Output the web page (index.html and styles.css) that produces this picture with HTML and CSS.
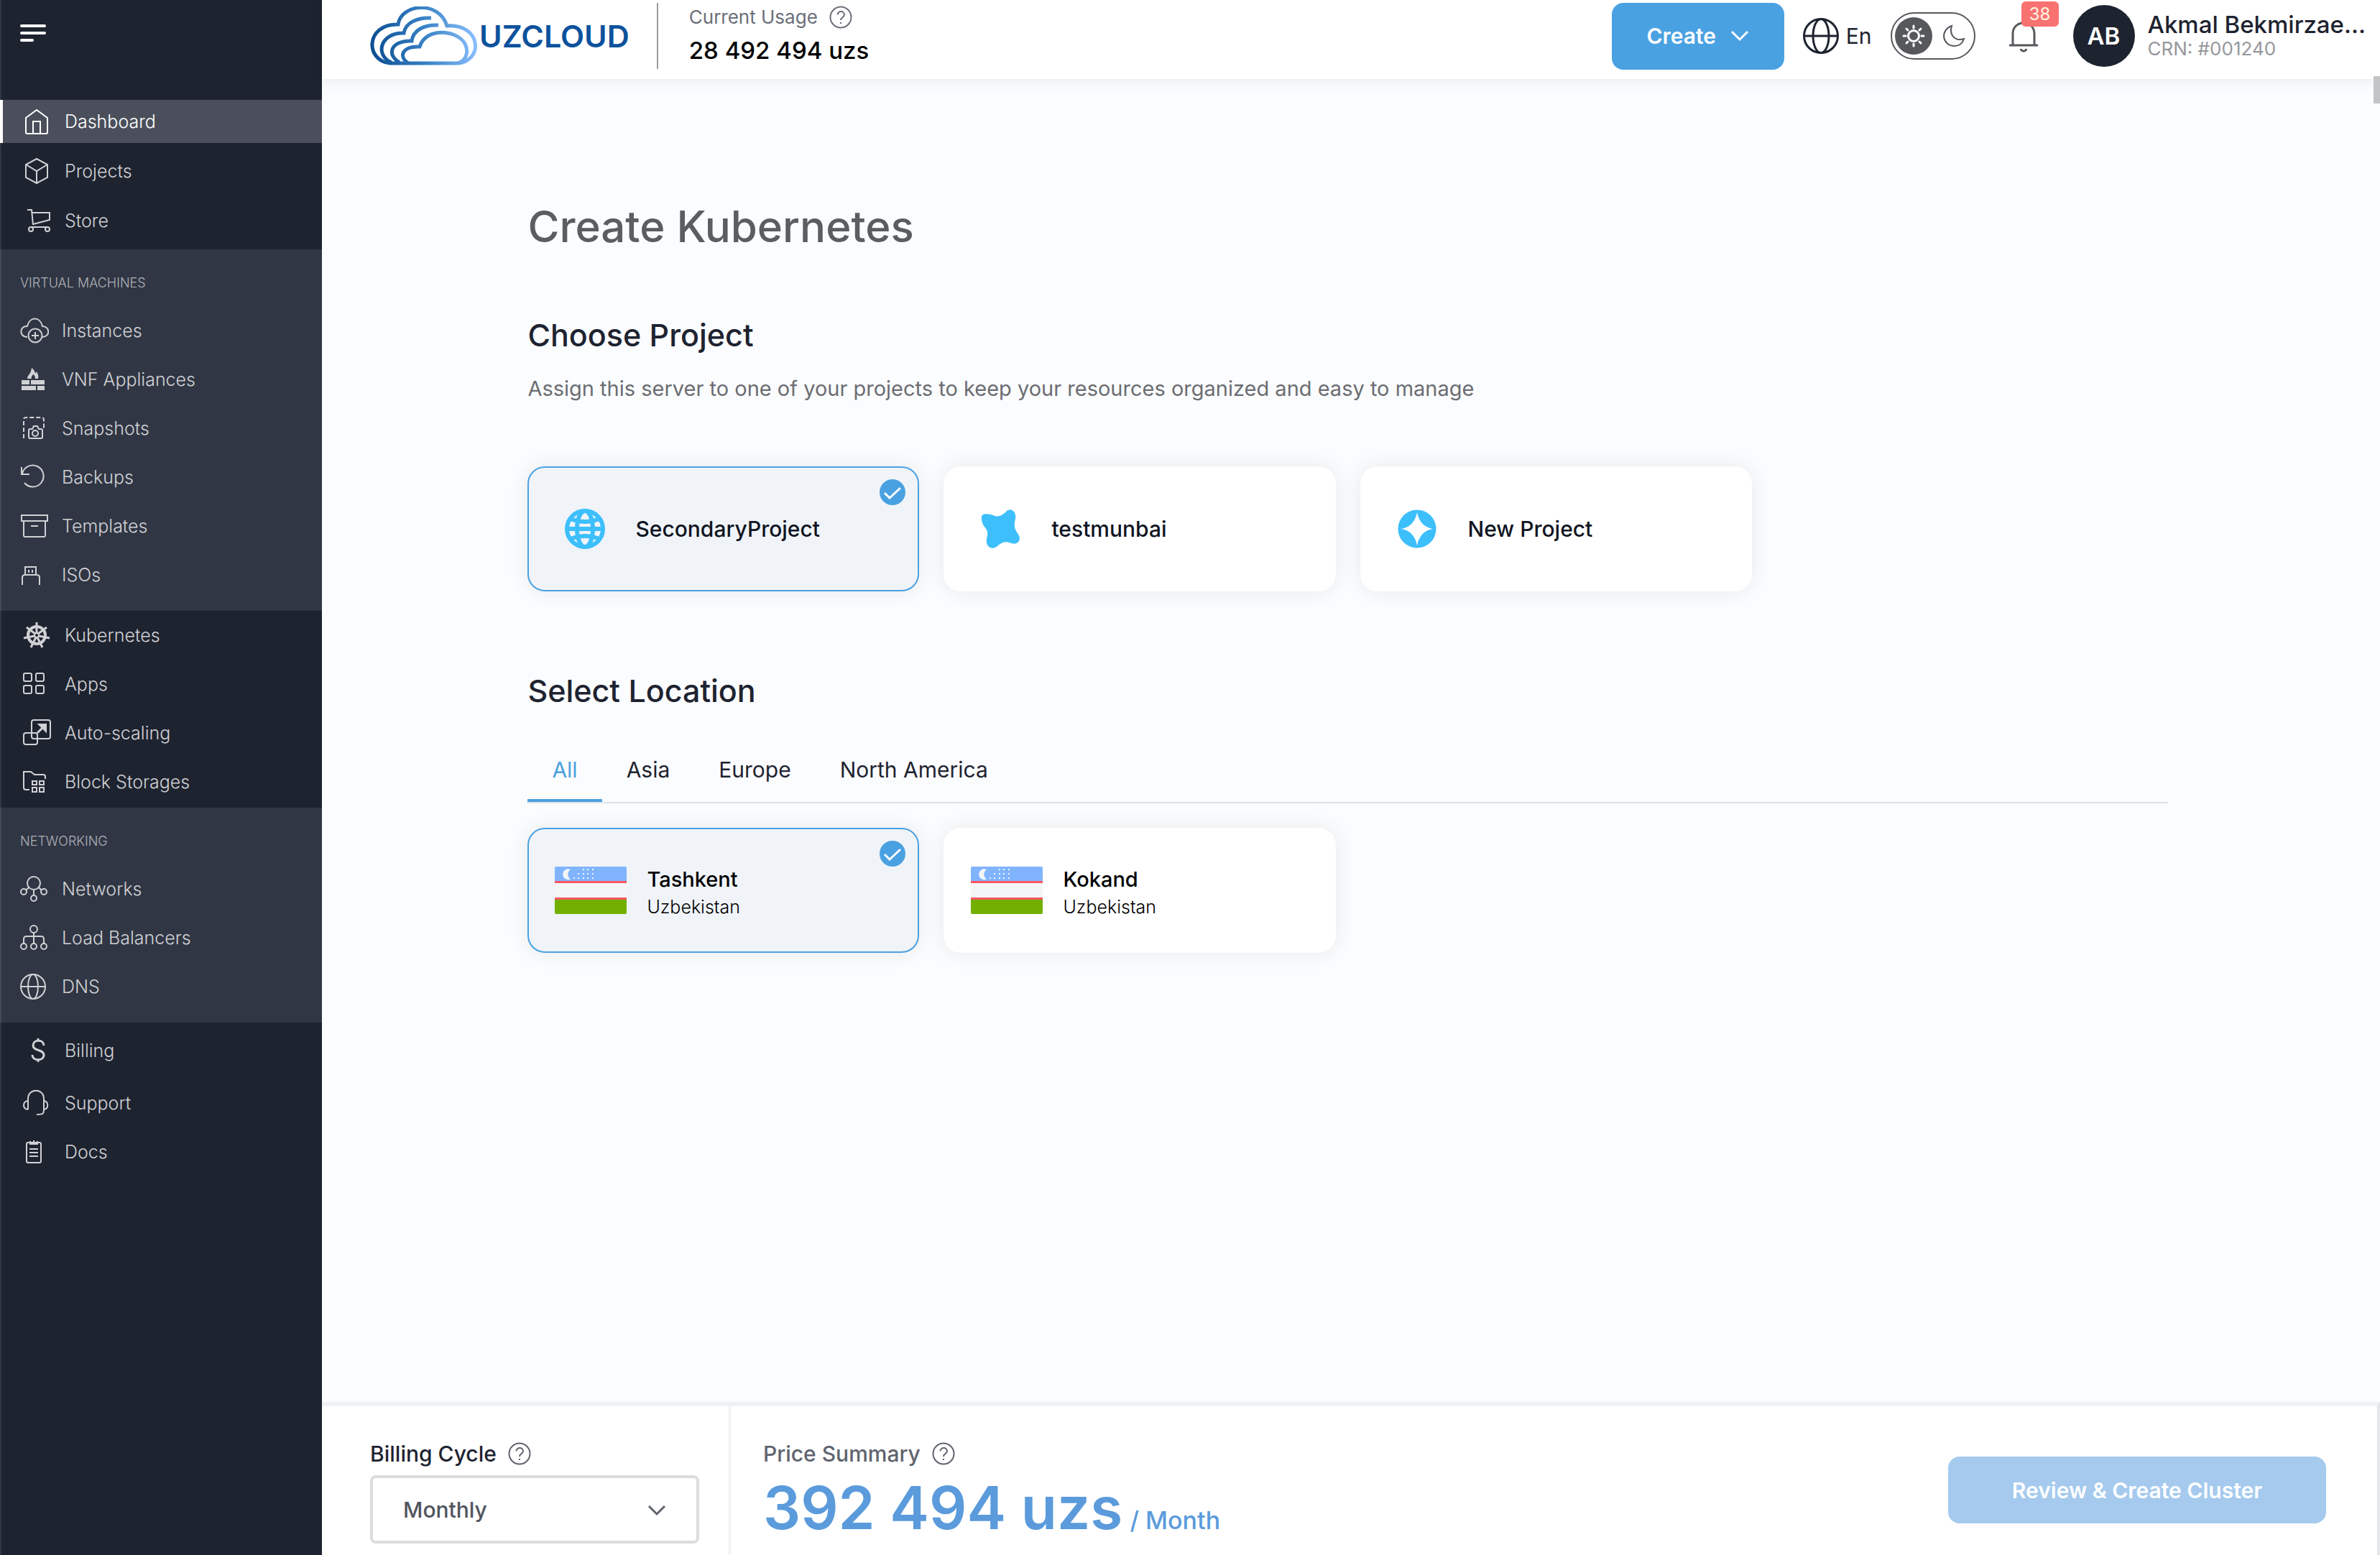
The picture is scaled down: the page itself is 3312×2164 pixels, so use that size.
FILE: index.html
```html
<!DOCTYPE html>
<html lang="en">
<head>
  <meta charset="UTF-8" />
  <title>Create Kubernetes - UzCloud</title>
  <meta name="viewport" content="width=device-width, initial-scale=1.0" />
  <link rel="stylesheet" href="styles.css">
</head>
<body>

  <!-- Shared icons -->
  <svg class="sprite" aria-hidden="true">
    <symbol id="i-help" viewBox="0 0 32 32">
      <circle cx="16" cy="16" r="14.5" />
      <path d="M11.5 12.5c0-6 9.5-5.800 9.500 0 0 3.500-5 3.500-5 7.500M16 23v2" />
    </symbol>
    <symbol id="i-check" viewBox="0 0 36 36">
      <circle cx="18" cy="18" r="18" fill="#4aa1e2" stroke="none" />
      <path d="M7 19l7 7L29 12" stroke="#fff" />
    </symbol>
    <symbol id="i-flag" viewBox="0 0 100 66">
      <path d="M0 2q0-2 2-2h96q2 0 2 2v18H0z" fill="#80b4ff" />
      <path d="M0 23h100v20H0z" fill="#f4f5f7" />
      <path d="M0 20h100v3H0zM0 43h100v3H0z" fill="#ff5560" />
      <path d="M0 46h100v18q0 2-2 2H2q-2 0-2-2z" fill="#73af00" />
      <path d="M22 4a7.500 7.500 0 1 0 0 13.500a8 8 0 0 1 0-13.500z" fill="#f4f5f7" />
      <path d="M39 3h2v2h-2zM45 3h2v2h-2zM52 3h2v2h-2zM32 9h2v2h-2zM39 9h2v2h-2zM45 9h2v2h-2zM52 9h2v2h-2zM26 15h2v2h-2zM32 15h2v2h-2zM39 15h2v2h-2zM45 15h2v2h-2zM52 15h2v2h-2z" fill="#f4f5f7" />
    </symbol>
  </svg>

  <aside class="sidebar">
    <div class="sidebar-top">
      <button class="menu-btn" aria-label="Toggle menu">
        <svg viewBox="0 0 36 26"><path d="M2 3h32M2 13h32M2 23h15" /></svg>
      </button>
    </div>

    <nav>
      <ul class="nav-list nav-main">
        <li><a href="#" class="active">
          <svg viewBox="0 0 40 40"><path d="M4 15L19 4l15 11v20q0 2-2 2H6q-2 0-2-2zM14 37V20h10v17" /></svg>
          Dashboard</a></li>
        <li><a href="#">
          <svg viewBox="0 0 40 40"><path d="M19 3l15 8v18l-15 8-15-8V11zM4 11l15 9 15-9M19 20v17" /></svg>
          Projects</a></li>
        <li><a href="#">
          <svg viewBox="0 0 40 40"><path d="M6 5h6l2 21M13 9h24v10l-23 6M12 29h22" /><circle cx="11" cy="32" r="3" /><circle cx="34" cy="32" r="3" /></svg>
          Store</a></li>
      </ul>

      <div class="nav-group">
        <h2>VIRTUAL MACHINES</h2>
        <ul class="nav-list">
          <li><a href="#">
            <svg viewBox="0 0 40 40"><path d="M10 29C-2 29-1 13 10 14C13 0 28 0 31 14c11 0 11 15 0 15" /><circle cx="21" cy="27" r="9.500" /><path d="M21 22v10M16 27h10" /></svg>
            Instances</a></li>
          <li><a href="#">
            <svg class="solid" viewBox="0 0 40 40"><path d="M2 21h11v6H2zM15 21h19v6H15zM2 29h20v6H2zM24 29h10v6H24zM10 19c0-5 5-6 6-15 4 3 5 6 5 8l2-3c2 4 3 7 2 10h-4c0-3-1-5-3-6-1 2-3 3-2 6z" /></svg>
            VNF Appliances</a></li>
          <li><a href="#">
            <svg viewBox="0 0 40 40"><path d="M5 34V8q0-3 3-3h22q3 0 3 3v12" stroke-dasharray="6 3" /><path d="M12 23q0-2 2-2h3l2-4h5l2 4h3q2 0 2 2v9q0 2-2 2H14q-2 0-2-2z" /><circle cx="21" cy="27" r="4" /></svg>
            Snapshots</a></li>
          <li><a href="#">
            <svg viewBox="0 0 40 40"><path d="M2 6v10h11M3 15A15 15 0 1 1 6 28" /></svg>
            Backups</a></li>
          <li><a href="#">
            <svg viewBox="0 0 40 40"><path d="M2 5h36v8H2zM5 13h30v20q0 2-2 2H7q-2 0-2-2zM15 20h10" /></svg>
            Templates</a></li>
          <li><a href="#">
            <svg viewBox="0 0 40 40"><path d="M3 34V24q0-4 4-4h16q4 0 4 4v10M7 20V9h15v11M12 13v4M17 13v4" /></svg>
            ISOs</a></li>
        </ul>
      </div>

      <ul class="nav-list nav-tools">
        <li><a href="#">
          <svg viewBox="0 0 40 40"><circle cx="19" cy="20" r="12" stroke-width="4" /><circle cx="19" cy="20" r="3" /><path stroke-width="3" d="M19 17V2M21 18l12-9M22 21l15 3M20 23l7 14M18 23l-7 14M16 21L1 24M17 18L5 9" /></svg>
          Kubernetes</a></li>
        <li><a href="#">
          <svg viewBox="0 0 40 40"><rect x="1" y="5" width="11" height="11" rx="2" /><rect x="18" y="5" width="11" height="11" rx="2" /><rect x="1" y="22" width="11" height="11" rx="2" /><rect x="18" y="22" width="11" height="11" rx="2" /></svg>
          Apps</a></li>
        <li><a href="#">
          <svg viewBox="0 0 40 40"><rect x="12" y="2" width="26" height="26" rx="3" /><rect x="1" y="20" width="19" height="16" rx="3" /><path d="M20 20L30 10" stroke-width="3" /><path d="M22 8h10v10z" fill="currentColor" /></svg>
          Auto-scaling</a></li>
        <li><a href="#">
          <svg viewBox="0 0 40 40"><path d="M9 31H4q-3 0-3-3V6h10l5 4h12q3 0 3 3v3" /><path d="M13 19h6v5h-6zM23 19h6v5h-6zM13 28h6v6h-6zM23 28h6v6h-6z" /></svg>
          Block Storages</a></li>
      </ul>

      <div class="nav-group">
        <h2>NETWORKING</h2>
        <ul class="nav-list">
          <li><a href="#">
            <svg viewBox="0 0 40 40"><circle cx="19" cy="12" r="9" /><circle cx="5" cy="24" r="4" /><circle cx="33" cy="24" r="4" /><circle cx="19" cy="33" r="4" /><path d="M12 18l-4 4M26 18l4 4M19 21v8" /></svg>
            Networks</a></li>
          <li><a href="#">
            <svg viewBox="0 0 40 40"><circle cx="19" cy="8" r="5" /><circle cx="5" cy="32" r="4" /><circle cx="19" cy="32" r="4" /><circle cx="33" cy="32" r="4" /><path d="M19 13v15M5 28v-6q0-4 4-4h20q4 0 4 4v6" /></svg>
            Load Balancers</a></li>
          <li><a href="#">
            <svg viewBox="0 0 40 40"><circle cx="18" cy="20" r="17" /><ellipse cx="18" cy="20" rx="7" ry="17" /><path d="M1 20h34" /></svg>
            DNS</a></li>
        </ul>
      </div>

      <ul class="nav-list nav-account">
        <li class="billing"><a href="#">
          <svg viewBox="0 0 40 40"><path stroke-width="3" d="M29 13c0-9-15-9-15 0 0 8 15 5 15 13 0 9-16 9-16 0M21 3v4M21 32v4" /></svg>
          Billing</a></li>
        <li><a href="#">
          <svg viewBox="0 0 40 40"><path d="M7 29V14c0-15 22-15 22 0v15c0 6-1 7-10 7M7 17c-8 1-8 11 0 12M29 17c7 1 7 11 0 12" /></svg>
          Support</a></li>
        <li><a href="#">
          <svg viewBox="0 0 40 40"><rect x="5" y="7" width="20" height="28" rx="2" /><path d="M10 5v4h10V5M15 4v4M9 16h12M9 21h12M9 26h12" /></svg>
          Docs</a></li>
      </ul>
    </nav>
  </aside>

  <div class="page">
    <header class="topbar">
      <a href="#" class="logo">
        <svg viewBox="0 0 150 82" aria-hidden="true">
          <defs>
            <linearGradient id="cloud" gradientUnits="userSpaceOnUse" x1="0" y1="50" x2="150" y2="40">
              <stop offset="0" stop-color="#0a4c90" />
              <stop offset=".5" stop-color="#3680c4" />
              <stop offset="1" stop-color="#8cc0ff" />
            </linearGradient>
          </defs>
          <path d="M29 79C-6 76-6 24 40 25C44-4 97-9 108 27C157 24 159 77 122 79Z" />
          <path d="M31 78C7 68 15 36 48 37C50 23 66 15 86 16" />
          <path d="M42 78C23 67 30 47 59 48C61 33 76 25 96 26" />
          <path d="M54 79C40 69 46 55 70 56C79 27 126 33 134 54C139 67 132 77 122 79" />
        </svg>
        <span>UZCLOUD</span>
      </a>

      <div class="usage">
        <div class="usage-label">Current Usage <svg class="help"><use href="#i-help" /></svg></div>
        <div class="usage-value">28 492 494 uzs</div>
      </div>

      <div class="topbar-right">
        <button class="btn create-btn">Create
          <svg viewBox="0 0 26 16"><path d="M2 2l11 11L24 2" /></svg>
        </button>
        <button class="lang">
          <svg viewBox="0 0 50 50"><circle cx="25" cy="25" r="23.500" /><ellipse cx="25" cy="25" rx="11" ry="23.500" /><path d="M2 25h46" /></svg>
          En
        </button>
        <button class="theme" aria-label="Switch theme">
          <svg class="sun" viewBox="0 0 52 52"><circle cx="26" cy="26" r="26" fill="#56585c" stroke="none" /><circle cx="26" cy="26" r="7.500" /><path d="M26 12v3M26 37v3M12 26h3M37 26h3M16 16l2 2M34 34l2 2M36 16l-2 2M18 34l-2 2" /></svg>
          <svg class="moon" viewBox="0 0 32 32"><path d="M13 2C-4 8 0 30 17 30c7 0 11-4 13-10C18 24 9 15 13 2z" /></svg>
        </button>
        <button class="bell" aria-label="Notifications">
          <svg viewBox="0 0 42 46"><path d="M6 36V20C6 0 36 0 36 20v16M1 36h40M17 41c1 4 7 4 8 0" /></svg>
          <span class="badge">38</span>
        </button>
        <div class="user">
          <span class="avatar">AB</span>
          <div>
            <div class="user-name">Akmal Bekmirzae...</div>
            <div class="user-crn">CRN: #001240</div>
          </div>
        </div>
      </div>
    </header>

    <main class="content">
      <div class="scroll-thumb"></div>

      <h1>Create Kubernetes</h1>

      <section>
        <h2>Choose Project</h2>
        <p class="hint">Assign this server to one of your projects to keep your resources organized and easy to manage</p>
        <div class="cards">
          <label class="card">
            <input type="radio" name="project" checked />
            <svg class="card-icon" viewBox="0 0 56 56">
              <circle cx="28" cy="28" r="25" /><ellipse cx="28" cy="28" rx="11" ry="25" /><path d="M3 28h50M8 14q20 8 40 0M8 42q20-8 40 0" />
            </svg>
            <span class="card-title">SecondaryProject</span>
            <svg class="check"><use href="#i-check" /></svg>
          </label>
          <label class="card">
            <input type="radio" name="project" />
            <svg class="card-icon solid" viewBox="0 0 56 56">
              <path d="M1 14C0 5 9 7 17 9C25 13 31 8 35 4C42-3 50 5 48 14C46 22 46 27 51 34C58 43 51 51 43 48C34 45 30 46 24 51C16 59 6 53 8 42C10 34 10 31 5 25C2 21 1 18 1 14z" />
            </svg>
            <span class="card-title">testmunbai</span>
            <svg class="check"><use href="#i-check" /></svg>
          </label>
          <label class="card">
            <input type="radio" name="project" />
            <svg class="card-icon solid" viewBox="0 0 56 56">
              <circle cx="27" cy="28" r="26.500" />
              <path d="M27 5Q31 25 49 28Q31 31 27 51Q23 31 5 28Q23 25 27 5z" fill="#fff" />
            </svg>
            <span class="card-title">New Project</span>
            <svg class="check"><use href="#i-check" /></svg>
          </label>
        </div>
      </section>

      <section>
        <h2>Select Location</h2>
        <div class="tabs">
          <button class="tab active">All</button>
          <button class="tab">Asia</button>
          <button class="tab">Europe</button>
          <button class="tab">North America</button>
        </div>
        <div class="cards">
          <label class="card card-location">
            <input type="radio" name="location" checked />
            <svg class="flag"><use href="#i-flag" /></svg>
            <span class="place"><b>Tashkent</b><small>Uzbekistan</small></span>
            <svg class="check"><use href="#i-check" /></svg>
          </label>
          <label class="card card-location">
            <input type="radio" name="location" />
            <svg class="flag"><use href="#i-flag" /></svg>
            <span class="place"><b>Kokand</b><small>Uzbekistan</small></span>
            <svg class="check"><use href="#i-check" /></svg>
          </label>
        </div>
      </section>
    </main>

    <footer class="summary">
      <div class="cycle">
        <label for="cycle" class="cycle-label">Billing Cycle <svg class="help"><use href="#i-help" /></svg></label>
        <div class="select-wrap">
          <select id="cycle">
            <option>Monthly</option>
          </select>
          <svg viewBox="0 0 26 16"><path d="M2 2l11 11L24 2" /></svg>
        </div>
      </div>
      <div class="price">
        <div class="price-label">Price Summary <svg class="help"><use href="#i-help" /></svg></div>
        <div class="price-value">392 494 uzs<span>/ Month</span></div>
      </div>
      <button class="btn review-btn" disabled>Review &amp; Create Cluster</button>
    </footer>
  </div>

</body>
</html>
```
FILE: styles.css
```css
* {
  box-sizing: border-box;
}

body {
  margin: 0;
  min-height: 100vh;
  display: flex;
  font-family: Inter, "Open Sans", sans-serif;
  font-size: 30px;
  color: #1e2330;
  background: #fbfcfe;
}

h1, h2, p, ul {
  margin: 0;
  padding: 0;
}

button, select {
  font: inherit;
  color: inherit;
  background: none;
  border: 0;
  padding: 0;
  cursor: pointer;
}

a {
  color: inherit;
  text-decoration: none;
}

svg {
  display: block;
  flex: none;
  fill: none;
  stroke: currentColor;
  stroke-width: 2;
}

svg.solid {
  fill: currentColor;
  stroke: none;
}

.sprite {
  position: absolute;
  width: 0;
  height: 0;
}

.help {
  width: 32px;
  height: 32px;
}

/* Sidebar */
.sidebar {
  width: 448px;
  flex: none;
  background: #1e2330;
  color: #d0d1d4;
  box-shadow: inset 2px 0 0 #303644;
}

.sidebar-top {
  height: 135px;
  padding: 30px 28px;
}

.menu-btn svg {
  width: 36px;
  height: 26px;
  color: #fff;
  stroke-width: 4;
  stroke-linecap: round;
}

.nav-list {
  list-style: none;
}

.nav-list li {
  padding: 4px 0;
}

.nav-list a {
  display: flex;
  align-items: center;
  gap: 18px;
  height: 60px;
  padding-left: 32px;
  font-size: 25px;
  font-weight: 300;
}

.nav-list a.active {
  background: #4a4f5b;
  color: #fff;
  box-shadow: inset 4px 0 0 #fff;
}

.nav-list svg {
  width: 40px;
  height: 40px;
}

.nav-main {
  display: grid;
  gap: 1px;
  padding-bottom: 6px;
}

.nav-tools {
  padding-bottom: 2px;
}

.nav-list .billing {
  padding: 9px 0;
}

.nav-group {
  padding: 32px 0 16px;
  background: #303644;
  box-shadow: inset 2px 0 0 #434956;
}

.nav-group h2 {
  margin-bottom: 17px;
  padding-left: 28px;
  font-size: 18px;
  line-height: 30px;
  font-weight: 300;
  color: #b0b2b8;
}

.nav-group a {
  padding-left: 28px;
}

/* Right side */
.page {
  flex: 1;
  min-width: 0;
  display: flex;
  flex-direction: column;
}

.topbar {
  display: flex;
  align-items: center;
  height: 110px;
  padding: 0 20px 10px 66px;
  background: #fff;
  box-shadow: 0 2px 20px rgba(0, 0, 0, 0.08);
}

.logo {
  display: flex;
  align-items: center;
  gap: 3px;
  font-size: 43px;
  font-weight: 600;
  color: #0d529c;
}

.logo svg {
  width: 150px;
  height: 82px;
  stroke: url(#cloud);
  stroke-width: 5;
}

.usage {
  margin-left: 38px;
  padding-left: 43px;
  border-left: 2px solid #9b9b9b;
}

.usage-label {
  display: flex;
  align-items: center;
  gap: 16px;
  font-size: 26px;
  line-height: 40px;
  font-weight: 400;
  color: #6b6f79;
}

.usage-value {
  font-size: 33px;
  line-height: 52px;
  font-weight: 500;
  color: #000;
}

.topbar-right {
  display: flex;
  align-items: center;
  margin-left: auto;
}

.btn {
  display: flex;
  align-items: center;
  justify-content: center;
  height: 93px;
  border-radius: 16px;
  font-size: 30px;
  font-weight: 600;
  color: #fff;
  background: #4aa1e2;
}

.create-btn {
  width: 240px;
  gap: 20px;
}

.create-btn svg,
.select-wrap svg {
  width: 26px;
  height: 16px;
  stroke-width: 3;
}

.lang {
  display: flex;
  align-items: center;
  gap: 10px;
  margin-left: 26px;
}

.lang svg {
  width: 50px;
  height: 50px;
  stroke-width: 3;
}

.theme {
  display: flex;
  align-items: center;
  gap: 14px;
  width: 118px;
  height: 66px;
  margin-left: 26px;
  padding-left: 4px;
  border: 2px solid #56585c;
  border-radius: 33px;
}

.sun {
  width: 52px;
  height: 52px;
  stroke: #fff;
  stroke-linecap: round;
  stroke-width: 3;
}

.moon {
  width: 32px;
  height: 32px;
  color: #56585c;
}

.bell {
  position: relative;
  margin-left: 46px;
  color: #56585c;
}

.bell svg {
  width: 42px;
  height: 46px;
  stroke-width: 3;
}

.badge {
  position: absolute;
  top: -25px;
  left: 18px;
  width: 52px;
  border-radius: 6px;
  font-size: 24px;
  line-height: 35px;
  text-align: center;
  color: #fff5e0;
  background: #f97272;
}

.user {
  display: flex;
  align-items: center;
  gap: 18px;
  margin-left: 48px;
}

.avatar {
  width: 86px;
  height: 86px;
  border-radius: 50%;
  font-size: 33px;
  line-height: 86px;
  font-weight: 600;
  text-align: center;
  color: #fff;
  background: #1e2330;
}

.user-name {
  font-size: 33px;
  line-height: 36px;
  font-weight: 500;
}

.user-crn {
  font-size: 26px;
  line-height: 32px;
  color: #96989c;
}

/* Content */
.content {
  position: relative;
  flex: 1;
  margin-right: 9px;
  padding: 160px 10% 40px;
}

.scroll-thumb {
  position: absolute;
  top: -4px;
  right: -9px;
  width: 9px;
  height: 38px;
  background: #c3c4c6;
}

h1 {
  margin-bottom: 77px;
  font-size: 60px;
  line-height: 90px;
  font-weight: 500;
  color: #5b5d61;
}

section {
  margin-bottom: 109px;
}

section h2 {
  font-size: 43px;
  line-height: 58px;
  font-weight: 500;
}

.hint {
  margin: 26px 0 88px;
  font-size: 29px;
  line-height: 40px;
  color: #6b6d72;
}

.cards {
  display: grid;
  grid-template-columns: repeat(4, 1fr);
  gap: 34px;
}

.card {
  position: relative;
  display: flex;
  align-items: center;
  gap: 42px;
  height: 174px;
  padding-left: 50px;
  border: 2px solid #fff;
  border-radius: 24px;
  background: #fff;
  box-shadow: 0 0 30px rgba(0, 0, 0, 0.08);
  cursor: pointer;
}

.card input {
  position: absolute;
  opacity: 0;
}

.card:has(input:checked) {
  border-color: #4aa1e2;
  background: #f0f4f9;
}

.card-icon {
  width: 56px;
  height: 56px;
  color: #3dbffc;
  stroke-width: 6;
}

.card-title {
  font-size: 30px;
  font-weight: 500;
  color: #101522;
}

.check {
  display: none;
  position: absolute;
  top: 16px;
  right: 17px;
  width: 36px;
  height: 36px;
  stroke-width: 3;
}

input:checked ~ .check {
  display: block;
}

.tabs {
  display: flex;
  margin: 44px 0 34px;
  border-bottom: 2px solid #dfe2e6;
}

.tab {
  height: 82px;
  padding: 0 34px 4px;
  border-bottom: 4px solid transparent;
  font-size: 30px;
}

.tab.active {
  color: #4aa1e2;
  border-color: #4aa1e2;
}

.card-location {
  gap: 28px;
  padding-left: 36px;
}

.flag {
  width: 100px;
  height: 66px;
  stroke: none;
}

.place {
  padding-top: 8px;
}

.place b,
.place small {
  display: block;
  line-height: 38px;
  color: #000;
}

.place b {
  font-size: 29px;
  font-weight: 500;
}

.place small {
  font-size: 25px;
  font-weight: 300;
}

/* Bottom bar */
.summary {
  display: flex;
  height: 213px;
  border-top: 6px solid #eff1f4;
  border-right: 4px solid #e4e5e7;
  background: #fff;
}

.cycle {
  width: 569px;
  padding: 46px 41px 0 67px;
  border-right: 3px solid #eff1f4;
}

.cycle-label,
.price-label {
  display: flex;
  align-items: center;
  gap: 16px;
  line-height: 40px;
  font-weight: 500;
}

.price-label,
.cycle .help {
  color: #60646e;
}

.select-wrap {
  position: relative;
  margin-top: 10px;
}

.select-wrap select {
  width: 100%;
  height: 95px;
  padding-left: 42px;
  border: 4px solid #dcdcdd;
  border-radius: 8px;
  appearance: none;
  font-weight: 500;
  color: #50545e;
}

.select-wrap svg {
  position: absolute;
  top: 41px;
  right: 46px;
  color: #60646e;
  pointer-events: none;
}

.price {
  padding: 46px 0 0 45px;
}

.price-value {
  font-size: 82px;
  line-height: 112px;
  font-weight: 600;
  color: #5b9bdc;
}

.price-value span {
  margin-left: 10px;
  font-size: 34px;
  font-weight: 500;
}

.review-btn {
  width: 526px;
  margin: 70px 71px 0 auto;
  background: #a5caee;
}
```
